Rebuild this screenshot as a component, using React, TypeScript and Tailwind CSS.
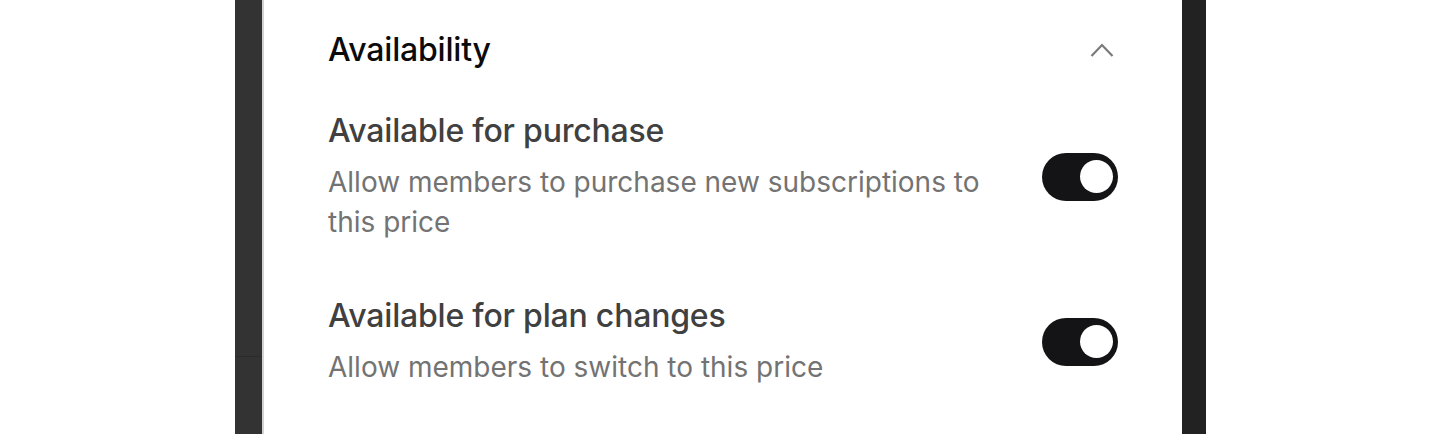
import React, { useState } from 'react';

type Option = {
  title: string;
  description: string;
};

const options: Option[] = [
  {
    title: 'Available for purchase',
    description: 'Allow members to purchase new subscriptions to this price',
  },
  {
    title: 'Available for plan changes',
    description: 'Allow members to switch to this price',
  },
];

function Toggle({ on, onChange }: { on: boolean; onChange: () => void }) {
  return (
    <button
      onClick={onChange}
      className={`flex h-[48px] w-[76px] shrink-0 items-center rounded-full px-[5px] ${
        on ? 'justify-end bg-[#141416]' : 'justify-start bg-[#d9d9d9]'
      }`}
    >
      <span className="block h-[33px] w-[33px] rounded-full bg-white" />
    </button>
  );
}

export default function App() {
  const [enabled, setEnabled] = useState<boolean[]>([true, true]);

  return (
    <div className="flex h-[434px] w-full overflow-hidden bg-white font-['Inter','Noto_Sans',sans-serif]">
      <div className="w-[235px] shrink-0" />

      {/* Dimmed page behind the panel */}
      <div className="flex w-[27px] shrink-0 flex-col bg-[#333333]">
        <div className="h-[356px] shrink-0" />
        <div className="h-px bg-[#2b2b2b]" />
      </div>
      <div className="w-[2px] shrink-0 bg-[#d2d2d2]" />

      {/* Panel */}
      <div className="w-[918px] shrink-0 bg-white pl-[64px] pr-[64px] pt-[30px]">
        <div className="flex h-[40px] items-center justify-between">
          <h2 className="text-[32px] font-medium leading-[40px] tracking-[-0.2px] text-[#0b0b0b]">Availability</h2>
          <svg width="24" height="16" viewBox="0 0 24 16" fill="none" className="mr-[4px]">
            <path d="M1.5 14 L12 3 L22.5 14" stroke="#7a7a7a" strokeWidth="2.2" />
          </svg>
        </div>

        <div className="mt-[41px] flex flex-col gap-[54px]">
          {options.map((opt, idx) => (
            <div key={idx} className="flex items-center">
              <div className="flex-1 pr-[48px]">
                <p className="text-[32px] font-medium leading-[40px] tracking-[-0.2px] text-[#404040]">{opt.title}</p>
                <p className="mt-[11px] text-[28px] leading-[40px] text-[#737373]">{opt.description}</p>
              </div>
              <Toggle
                on={enabled[idx]}
                onChange={() => setEnabled(enabled.map((v, i) => (i === idx ? !v : v)))}
              />
            </div>
          ))}
        </div>
      </div>

      <div className="w-[24px] shrink-0 bg-[#222222]" />
      <div className="flex-1" />
    </div>
  );
}
